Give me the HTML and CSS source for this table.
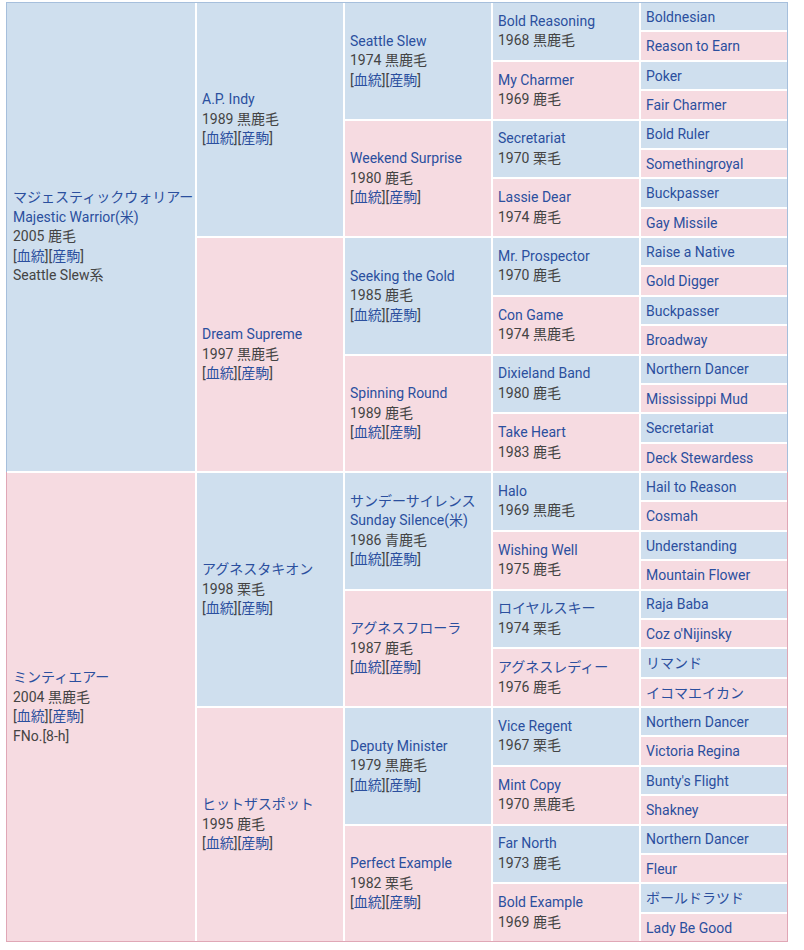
FILE: index.html
```html
<!DOCTYPE html>
<html lang="ja">
<head>
<meta charset="utf-8">
<title>血統表</title>
<link rel="stylesheet" href="styles.css">
</head>
<body>
<div class="frame">
<div class="pedigree">
  <div class="c g1 m">
    <a class="n">マジェスティックウォリアー</a>
    <a class="n">Majestic Warrior(米)</a>
    <span class="t">2005 鹿毛</span>
    <span class="t">[<a>血統</a>][<a>産駒</a>]</span>
    <span class="t">Seattle Slew系</span>
  </div>
  <div class="c g2 m"><a class="n">A.P. Indy</a><span class="t">1989 黒鹿毛</span><span class="t">[<a>血統</a>][<a>産駒</a>]</span></div>
  <div class="c g3 m"><a class="n">Seattle Slew</a><span class="t">1974 黒鹿毛</span><span class="t">[<a>血統</a>][<a>産駒</a>]</span></div>
  <div class="c g4 m"><a class="n">Bold Reasoning</a><span class="t">1968 黒鹿毛</span></div>
  <div class="c g5 m"><a class="n">Boldnesian</a></div>
  <div class="c g5 f"><a class="n">Reason to Earn</a></div>
  <div class="c g4 f"><a class="n">My Charmer</a><span class="t">1969 鹿毛</span></div>
  <div class="c g5 m"><a class="n">Poker</a></div>
  <div class="c g5 f"><a class="n">Fair Charmer</a></div>
  <div class="c g3 f"><a class="n">Weekend Surprise</a><span class="t">1980 鹿毛</span><span class="t">[<a>血統</a>][<a>産駒</a>]</span></div>
  <div class="c g4 m"><a class="n">Secretariat</a><span class="t">1970 栗毛</span></div>
  <div class="c g5 m"><a class="n">Bold Ruler</a></div>
  <div class="c g5 f"><a class="n">Somethingroyal</a></div>
  <div class="c g4 f"><a class="n">Lassie Dear</a><span class="t">1974 鹿毛</span></div>
  <div class="c g5 m"><a class="n">Buckpasser</a></div>
  <div class="c g5 f"><a class="n">Gay Missile</a></div>
  <div class="c g2 f"><a class="n">Dream Supreme</a><span class="t">1997 黒鹿毛</span><span class="t">[<a>血統</a>][<a>産駒</a>]</span></div>
  <div class="c g3 m"><a class="n">Seeking the Gold</a><span class="t">1985 鹿毛</span><span class="t">[<a>血統</a>][<a>産駒</a>]</span></div>
  <div class="c g4 m"><a class="n">Mr. Prospector</a><span class="t">1970 鹿毛</span></div>
  <div class="c g5 m"><a class="n">Raise a Native</a></div>
  <div class="c g5 f"><a class="n">Gold Digger</a></div>
  <div class="c g4 f"><a class="n">Con Game</a><span class="t">1974 黒鹿毛</span></div>
  <div class="c g5 m"><a class="n">Buckpasser</a></div>
  <div class="c g5 f"><a class="n">Broadway</a></div>
  <div class="c g3 f"><a class="n">Spinning Round</a><span class="t">1989 鹿毛</span><span class="t">[<a>血統</a>][<a>産駒</a>]</span></div>
  <div class="c g4 m"><a class="n">Dixieland Band</a><span class="t">1980 鹿毛</span></div>
  <div class="c g5 m"><a class="n">Northern Dancer</a></div>
  <div class="c g5 f"><a class="n">Mississippi Mud</a></div>
  <div class="c g4 f"><a class="n">Take Heart</a><span class="t">1983 鹿毛</span></div>
  <div class="c g5 m"><a class="n">Secretariat</a></div>
  <div class="c g5 f"><a class="n">Deck Stewardess</a></div>

  <div class="c g1 f">
    <a class="n">ミンティエアー</a>
    <span class="t">2004 黒鹿毛</span>
    <span class="t">[<a>血統</a>][<a>産駒</a>]</span>
    <span class="t">FNo.[8-h]</span>
  </div>
  <div class="c g2 m"><a class="n">アグネスタキオン</a><span class="t">1998 栗毛</span><span class="t">[<a>血統</a>][<a>産駒</a>]</span></div>
  <div class="c g3 m"><a class="n">サンデーサイレンス</a><a class="n">Sunday Silence(米)</a><span class="t">1986 青鹿毛</span><span class="t">[<a>血統</a>][<a>産駒</a>]</span></div>
  <div class="c g4 m"><a class="n">Halo</a><span class="t">1969 黒鹿毛</span></div>
  <div class="c g5 m"><a class="n">Hail to Reason</a></div>
  <div class="c g5 f"><a class="n">Cosmah</a></div>
  <div class="c g4 f"><a class="n">Wishing Well</a><span class="t">1975 鹿毛</span></div>
  <div class="c g5 m"><a class="n">Understanding</a></div>
  <div class="c g5 f"><a class="n">Mountain Flower</a></div>
  <div class="c g3 f"><a class="n">アグネスフローラ</a><span class="t">1987 鹿毛</span><span class="t">[<a>血統</a>][<a>産駒</a>]</span></div>
  <div class="c g4 m"><a class="n">ロイヤルスキー</a><span class="t">1974 栗毛</span></div>
  <div class="c g5 m"><a class="n">Raja Baba</a></div>
  <div class="c g5 f"><a class="n">Coz o'Nijinsky</a></div>
  <div class="c g4 f"><a class="n">アグネスレディー</a><span class="t">1976 鹿毛</span></div>
  <div class="c g5 m"><a class="n">リマンド</a></div>
  <div class="c g5 f"><a class="n">イコマエイカン</a></div>
  <div class="c g2 f"><a class="n">ヒットザスポット</a><span class="t">1995 鹿毛</span><span class="t">[<a>血統</a>][<a>産駒</a>]</span></div>
  <div class="c g3 m"><a class="n">Deputy Minister</a><span class="t">1979 黒鹿毛</span><span class="t">[<a>血統</a>][<a>産駒</a>]</span></div>
  <div class="c g4 m"><a class="n">Vice Regent</a><span class="t">1967 栗毛</span></div>
  <div class="c g5 m"><a class="n">Northern Dancer</a></div>
  <div class="c g5 f"><a class="n">Victoria Regina</a></div>
  <div class="c g4 f"><a class="n">Mint Copy</a><span class="t">1970 黒鹿毛</span></div>
  <div class="c g5 m"><a class="n">Bunty's Flight</a></div>
  <div class="c g5 f"><a class="n">Shakney</a></div>
  <div class="c g3 f"><a class="n">Perfect Example</a><span class="t">1982 栗毛</span><span class="t">[<a>血統</a>][<a>産駒</a>]</span></div>
  <div class="c g4 m"><a class="n">Far North</a><span class="t">1973 鹿毛</span></div>
  <div class="c g5 m"><a class="n">Northern Dancer</a></div>
  <div class="c g5 f"><a class="n">Fleur</a></div>
  <div class="c g4 f"><a class="n">Bold Example</a><span class="t">1969 鹿毛</span></div>
  <div class="c g5 m"><a class="n">ボールドラツド</a></div>
  <div class="c g5 f"><a class="n">Lady Be Good</a></div>
</div>
</div>
</body>
</html>
```

FILE: styles.css
```css
html, body {
  margin: 0;
  padding: 0;
  background: #ffffff;
}

body {
  font-family: Roboto, "Noto Sans CJK JP", "Noto Sans", sans-serif;
  font-size: 14px;
  line-height: 19.5px;
  color: #444444;
}

.frame {
  width: 780px;
  margin: 2px 0 0 6px;
  padding: 1px;
  background: linear-gradient(to bottom, #a6bfdc 0, #a6bfdc 50%, #e0a7b6 50%, #e0a7b6 100%);
}

.pedigree {
  display: grid;
  grid-template-columns: 188px repeat(4, 146px);
  grid-template-rows: repeat(32, 1fr);
  gap: 2px;
  height: 938px;
  background: #ffffff;
}

.c {
  display: flex;
  flex-direction: column;
  justify-content: center;
  padding: 0 5px;
  min-width: 0;
  white-space: nowrap;
}

.m { background: #cfdfee; }
.f { background: #f6dbe1; }

.g1 { grid-column: 1; grid-row: span 16; padding-left: 6px; }
.g2 { grid-column: 2; grid-row: span 8; }
.g3 { grid-column: 3; grid-row: span 4; }
.g4 { grid-column: 4; grid-row: span 2; }
.g5 { grid-column: 5; grid-row: span 1; padding-top: 2px; }

.c a {
  color: #2b4f9e;
  text-decoration: none;
}

.n, .t {
  display: block;
}
```
